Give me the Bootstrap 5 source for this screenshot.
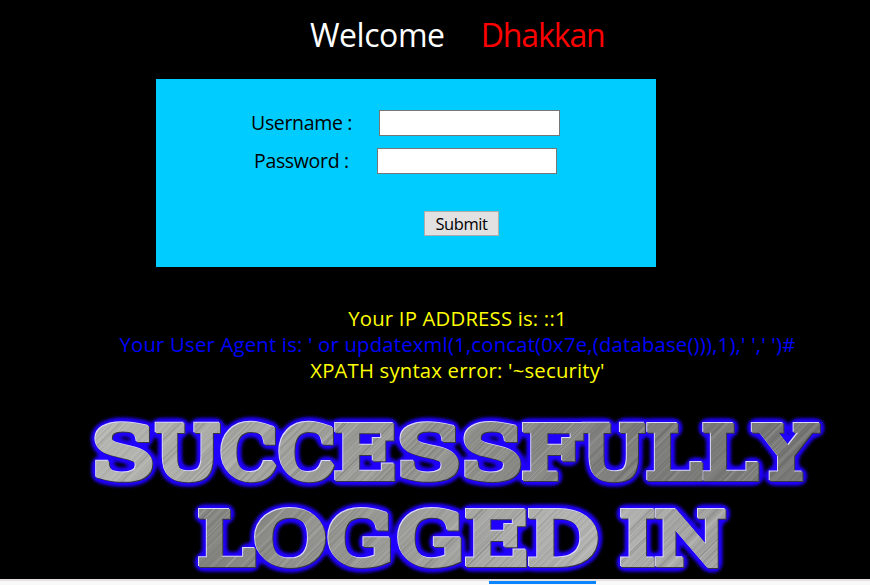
<!DOCTYPE html>
<html lang="en">
<head>
<meta charset="utf-8">
<title>Welcome Dhakkan</title>
<link href="https://cdn.jsdelivr.net/npm/bootstrap@5.3.0/dist/css/bootstrap.min.css" rel="stylesheet">
<style>
body{background:#000;font-family:"Open Sans","Noto Sans",sans-serif;font-size:20px;line-height:26px;height:585px}
.greeting{height:79px;padding:13px 0 0 310px;font-size:32px;line-height:44px;gap:36px}
.greeting .hello{letter-spacing:-.45px}
.greeting .who{color:#f00;letter-spacing:-1.1px}
.login-box{width:500px;height:188px;margin-left:156px;background:#0cf;color:#000;padding-top:31px}
.login-box label{width:128px;white-space:nowrap;font-size:19.5px;letter-spacing:-.33px}
.login-box .field{width:181px;height:26px;min-height:0;padding:0;border:1px solid #767676;border-radius:0;background:#fff}
.row-user{padding-left:95px;margin-bottom:12px}
.row-pass{padding-left:98px;margin-bottom:37px}
.row-pass label{width:123px}
.row-pass .field{width:180px}
.send{display:block;width:75px;height:25px;margin-left:268px;padding:0;border:1px solid #adadad;border-radius:0;background:#e1e1e1;color:#000;font-size:16.5px;line-height:23px;letter-spacing:-.4px}
.report{height:99px;margin-top:38px;padding-left:45px;color:#ff0;white-space:nowrap;font-size:20.3px;letter-spacing:.2px}
.report .agent{color:#00f}
.banner{width:870px;height:175px}
.banner text{font-family:"DejaVu Serif",serif;font-weight:400;font-size:80px}
.bottom-strip{height:6px;background:#f8f8f8;border-top:2px solid #e5e0e2}
.bottom-strip .thumb{width:107px;height:3px;margin-left:489px;background:#0a84ff}
</style>
</head>
<body class="overflow-hidden d-flex flex-column">
<header class="greeting d-flex text-white flex-shrink-0"><span class="hello">Welcome</span><span class="who">Dhakkan</span></header>
<form class="login-box flex-shrink-0">
  <div class="row-user d-flex align-items-center"><label for="u">Username :</label><input id="u" class="form-control field" type="text"></div>
  <div class="row-pass d-flex align-items-center"><label for="p">Password :</label><input id="p" class="form-control field" type="password"></div>
  <button class="btn send" type="button">Submit</button>
</form>
<div class="report text-center flex-shrink-0">
  <div class="ip"><span>Your IP ADDRESS is: ::1</span></div>
  <div class="agent"><span>Your User Agent is: ' or updatexml(1,concat(0x7e,(database())),1),' ',' ')#</span></div>
  <div class="err"><span>XPATH syntax error: '~security'</span></div>
</div>
<svg class="banner flex-shrink-0" viewBox="0 -20 870 175">
  <defs>
    <linearGradient id="steelA" gradientUnits="userSpaceOnUse" x1="95" y1="0" x2="820" y2="0"><stop offset="0" stop-color="#b2b2ae"/><stop offset=".4" stop-color="#989894"/><stop offset=".7" stop-color="#80807d"/><stop offset="1" stop-color="#757573"/></linearGradient>
    <linearGradient id="steelB" gradientUnits="userSpaceOnUse" x1="199" y1="0" x2="726" y2="0"><stop offset="0" stop-color="#858581"/><stop offset=".5" stop-color="#a3a3a0"/><stop offset=".75" stop-color="#b4b4b2"/><stop offset="1" stop-color="#a0a09e"/></linearGradient>
    <pattern id="brushA" y="-20" width="870" height="175" patternUnits="userSpaceOnUse"></pattern>
    <pattern id="brushB" y="-20" width="870" height="175" patternUnits="userSpaceOnUse"></pattern>
    <filter id="glow" filterUnits="userSpaceOnUse" x="0" y="-20" width="870" height="175" color-interpolation-filters="sRGB">
      <feGaussianBlur in="SourceAlpha" stdDeviation="3.8" result="b"/>
      <feComponentTransfer in="b" result="w"><feFuncA type="linear" slope="12" intercept="-.6"/></feComponentTransfer>
      <feGaussianBlur in="w" stdDeviation="1.6" result="ws"/>
      <feFlood flood-color="#2000ff"/><feComposite in2="ws" operator="in" result="blue"/>
      <feOffset in="SourceAlpha" dx="-.8" dy="-.8" result="l"/><feFlood flood-color="#dcd8ff"/><feComposite in2="l" operator="in" result="light"/>
      <feOffset in="SourceAlpha" dx=".8" dy=".9" result="d"/><feFlood flood-color="#343444"/><feComposite in2="d" operator="in" result="dark"/>
      <feMerge><feMergeNode in="blue"/><feMergeNode in="dark"/><feMergeNode in="light"/><feMergeNode in="SourceGraphic"/></feMerge>
    </filter>
  </defs>
</svg>
<div class="bottom-strip flex-shrink-0"><div class="thumb"></div></div>
<script src="https://cdn.jsdelivr.net/npm/bootstrap@5.3.0/dist/js/bootstrap.bundle.min.js"></script>
<script>
/* Metallic lettering: each letter is fitted between its left and right edge. */
const NS='http://www.w3.org/2000/svg',svg=document.querySelector('.banner'),defs=svg.querySelector('defs');
let seed=7;const rnd=()=>(seed=(seed*16807)%2147483647)/2147483647;
for(const k of ['A','B']){
  let s=`<rect width="870" height="175" fill="url(#steel${k})"/>`;
  for(let x=0;x<1050;x+=1.2+rnd()*1.6){s+=`<path d="M${x.toFixed(1)} 0l-175 175" stroke="${rnd()>.5?'#fff':'#222'}" stroke-opacity="${(rnd()*.18).toFixed(2)}" stroke-width="${(.4+rnd()).toFixed(1)}"/>`}
  svg.querySelector('#brush'+k).innerHTML=s;
}
const ctx=document.createElement('canvas').getContext('2d');ctx.font='80px "DejaVu Serif"';
const S=6.6,FLAT=58.3;
const words=[
 ['SUCCESSFULLY',57,'A',[[95,152],[155,220],[221,277],[279,335],[335,394],[400,458],[464,520],[523,584],[582,645],[647,703],[703,759],[752,820]]],
 ['LOGGED IN',143,'B',[[199,256],[255,326],[328,390],[398,461],[466,526],[529,598],null,[621,655],[655,726]]]];
for(const [word,base,k,ext] of words){
  const g=document.createElementNS(NS,'g');g.setAttribute('filter','url(#glow)');
  [...word].forEach((c,i)=>{ if(!ext[i])return;
    const m=ctx.measureText(c),[l,r]=ext[i],w=m.actualBoundingBoxLeft+m.actualBoundingBoxRight;
    const sx=(r-l-S)/w,sy=(FLAT-S)/FLAT,x=l+S/2+m.actualBoundingBoxLeft*sx,y=base-S/2;
    const t=document.createElementNS(NS,'text');
    t.textContent=c;
    t.setAttribute('transform',`translate(${x} ${y}) scale(${sx} ${sy})`);
    /* the brushed metal stays fixed on the banner, so undo the letter's own transform */
    const p=document.createElementNS(NS,'pattern'),id='m'+k+i;
    p.id=id;p.setAttribute('href','#brush'+k);p.setAttribute('patternTransform',`scale(${1/sx} ${1/sy}) translate(${-x} ${-y})`);
    defs.append(p);
    t.setAttribute('fill',`url(#${id})`);t.setAttribute('stroke',`url(#${id})`);
    t.setAttribute('stroke-width',S/((sx+sy)/2));t.setAttribute('stroke-linejoin','miter');t.setAttribute('stroke-miterlimit','1.6');
    g.append(t);});
  svg.append(g);
}
</script>
</body>
</html>
